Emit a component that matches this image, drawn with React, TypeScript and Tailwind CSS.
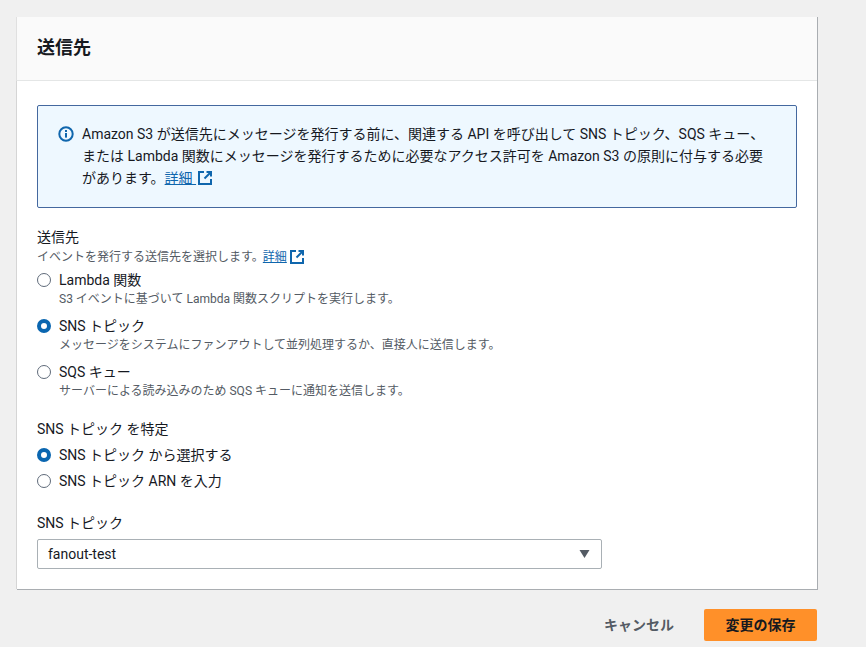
import React from "react";

const font = {
  base: "font-['Roboto','Noto_Sans_CJK_JP',sans-serif]",
};

const ExternalIcon = ({ className }: { className: string }) => (
  <svg viewBox="0 0 14 14" fill="none" stroke="#0f66ad" strokeWidth="2" className={className}>
    <path d="M6 1H1v12h12V8" />
    <path d="M8.5 1H13v4.5" />
    <path d="M13 1 6.5 7.5" />
  </svg>
);

const InfoIcon = () => (
  <svg viewBox="0 0 16 16" className="mt-[3px] h-4 w-4 shrink-0">
    <circle cx="8" cy="8" r="6.7" fill="none" stroke="#0f66ad" strokeWidth="2" />
    <rect x="7" y="7" width="2" height="4.6" fill="#0f66ad" />
    <rect x="7" y="4" width="2" height="2" fill="#0f66ad" />
  </svg>
);

const Radio = ({ checked }: { checked?: boolean }) =>
  checked ? (
    <span className="h-[14px] w-[14px] shrink-0 rounded-full border-[4px] border-[#0a66b0] bg-white" />
  ) : (
    <span className="h-[14px] w-[14px] shrink-0 rounded-full border border-[#5f6b7a] bg-white" />
  );

const RadioRow = ({
  label,
  desc,
  checked,
}: {
  label: string;
  desc?: string;
  checked?: boolean;
}) => (
  <div>
    <div className="flex h-[22px] items-center gap-2 text-[14px] text-[#16191f]">
      <Radio checked={checked} />
      <span>{label}</span>
    </div>
    {desc && <div className="ml-[22px] h-[16px] text-[12px] leading-[16px] text-[#545b64]">{desc}</div>}
  </div>
);

export default function App() {
  return (
    <div className={`${font.base} h-[647px] w-[866px] overflow-hidden bg-[#f0f0f0] pl-[17px] pt-[17px]`}>
      <div className="w-[801px] border-b border-r border-[#a9adb1] bg-white">
        {/* Header */}
        <div className="flex h-[64px] items-center border-b border-[#e4e6e6] bg-[#fafafa] pl-[20px] shadow-[-1px_0_0_#e0e0e0]">
          <h2 className="mb-[3px] text-[18px] font-bold text-[#16191f]">送信先</h2>
        </div>

        <div className="px-[20px] pb-[20px] pt-[24px] shadow-[-1px_0_0_#d5d5d5]">
          {/* Info alert */}
          <div className="flex h-[103px] gap-2 rounded-[2px] border border-[#44689f] bg-[#eef8ff] pl-[20px] pr-[14px] pt-[17px] text-[14px] leading-[22px] text-[#16191f]">
            <InfoIcon />
            <p>
              Amazon S3 が送信先にメッセージを発行する前に、関連する API を呼び出して SNS トピック、SQS キュー、
              <br />
              または Lambda 関数にメッセージを発行するために必要なアクセス許可を Amazon S3 の原則に付与する必要
              <br />
              があります。
              <a className="text-[#0f66ad] underline">詳細 </a>
              <ExternalIcon className="mb-[2px] ml-[2px] inline h-[14px] w-[14px]" />
            </p>
          </div>

          {/* Destination */}
          <div className="mt-[18px]">
            <div className="text-[14px] leading-[22px] text-[#16191f]">送信先</div>
            <div className="mt-[1px] flex h-[16px] items-center text-[12px] text-[#545b64]">
              イベントを発行する送信先を選択します。
              <a className="ml-[-1px] text-[#0f66ad] underline">詳細 </a>
              <ExternalIcon className="ml-[3px] h-[14px] w-[14px]" />
            </div>
            <div className="mt-[4px] flex flex-col gap-[8px]">
              <RadioRow label="Lambda 関数" desc="S3 イベントに基づいて Lambda 関数スクリプトを実行します。" />
              <RadioRow checked label="SNS トピック" desc="メッセージをシステムにファンアウトして並列処理するか、直接人に送信します。" />
              <RadioRow label="SQS キュー" desc="サーバーによる読み込みのため SQS キューに通知を送信します。" />
            </div>
          </div>

          {/* Topic source */}
          <div className="mt-[19px]">
            <div className="text-[14px] leading-[22px] text-[#16191f]">SNS トピック を特定</div>
            <div className="mt-[4px] flex flex-col gap-[4px]">
              <RadioRow checked label="SNS トピック から選択する" />
              <RadioRow label="SNS トピック ARN を入力" />
            </div>
          </div>

          {/* Topic select */}
          <div className="mt-[20px]">
            <div className="text-[14px] leading-[22px] text-[#16191f]">SNS トピック</div>
            <div className="mt-[5px] flex h-[30px] w-[565px] items-center justify-between rounded-[2px] border border-[#a9b0b5] bg-white pl-[10px] pr-[11px] text-[14px] text-[#16191f]">
              <span>fanout-test</span>
              <svg viewBox="0 0 10 8" className="h-[8px] w-[11px]">
                <path d="M0 0h10L5 8z" fill="#545b64" />
              </svg>
            </div>
          </div>
        </div>
      </div>

      {/* Actions */}
      <div className="mt-[19px] flex w-[800px] items-center justify-end">
        <button className="mr-[30px] text-[14px] font-bold text-[#545b64]">キャンセル</button>
        <button className="h-[32px] w-[113px] rounded-[2px] bg-[#ff9029] text-[14px] font-bold text-[#16191f]">変更の保存</button>
      </div>
    </div>
  );
}
